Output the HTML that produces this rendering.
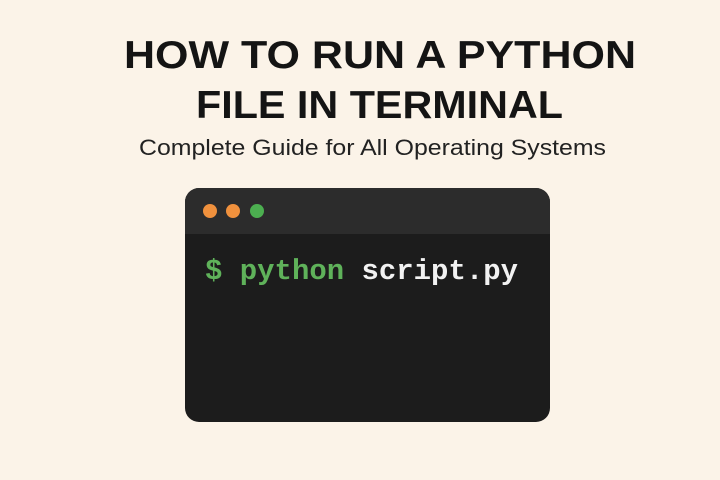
<!DOCTYPE html>
<html><head><meta charset="utf-8"><style>
html,body{margin:0;padding:0;background:#fbf3e8;}
svg{display:block}
</style></head><body>
<svg width="720" height="480" viewBox="0 0 720 480" xmlns="http://www.w3.org/2000/svg">
<rect width="720" height="480" fill="#fbf3e8"/>
<text x="124" y="68" font-family="Liberation Sans, sans-serif" font-weight="bold" font-size="39" fill="#141414" textLength="512" lengthAdjust="spacingAndGlyphs">HOW TO RUN A PYTHON</text>
<text x="196" y="118" font-family="Liberation Sans, sans-serif" font-weight="bold" font-size="39" fill="#141414" textLength="367" lengthAdjust="spacingAndGlyphs">FILE IN TERMINAL</text>
<text x="139" y="155" font-family="Liberation Sans, sans-serif" font-size="22.5" fill="#222" textLength="467" lengthAdjust="spacingAndGlyphs">Complete Guide for All Operating Systems</text>
<rect x="185" y="188" width="365" height="234" rx="14" fill="#1c1c1c"/>
<path d="M185 234 V202 a14 14 0 0 1 14 -14 H536 a14 14 0 0 1 14 14 V234 Z" fill="#2c2c2c"/>
<circle cx="210" cy="211" r="7" fill="#f0913d"/>
<circle cx="233" cy="211" r="7" fill="#f0913d"/>
<circle cx="257" cy="211" r="7" fill="#4caf50"/>
<text x="205" y="279" font-family="Liberation Mono, monospace" font-weight="bold" font-size="29" textLength="313" lengthAdjust="spacingAndGlyphs"><tspan fill="#5fb25a">$ python</tspan><tspan fill="#f2f2f2"> script.py</tspan></text>
</svg>
</body></html>
